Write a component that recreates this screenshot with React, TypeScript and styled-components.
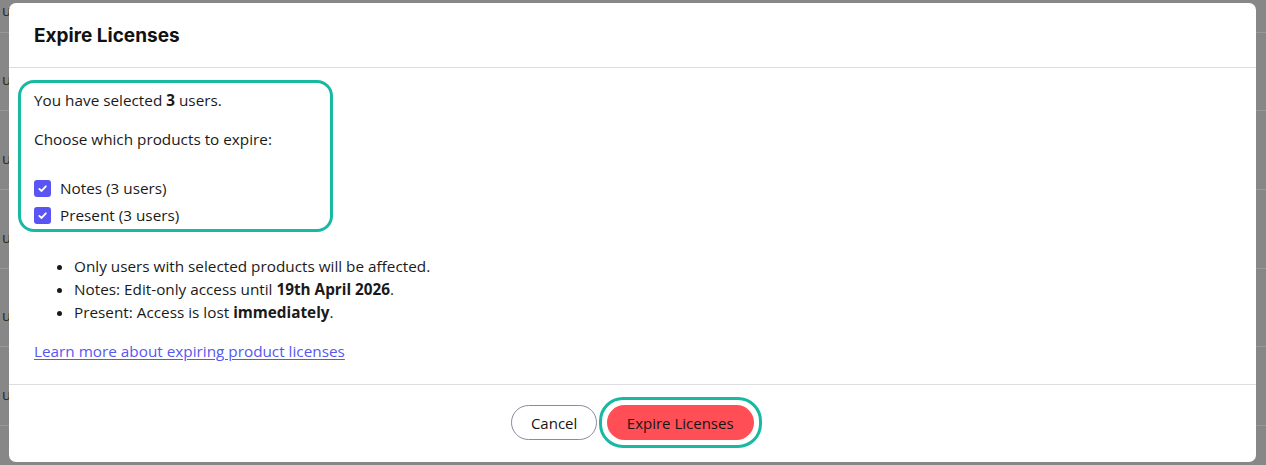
import React from "react";
import styled, { createGlobalStyle } from "styled-components";

const Global = createGlobalStyle`
  html, body { margin: 0; padding: 0; }
  body {
    width: 1266px;
    height: 465px;
    overflow: hidden;
    background: #878787;
    font-family: "Open Sans", "Noto Sans", sans-serif;
  }
`;

const Page = styled.div`
  position: relative;
  width: 1266px;
  height: 465px;
  overflow: hidden;
  background: #878787;
`;

const BgRow = styled.div<{ $h: number; $pb?: number }>`
  height: ${(p) => p.$h}px;
  box-sizing: border-box;
  border-bottom: 1px solid #999999;
  display: flex;
  align-items: flex-end;
  padding: 0 0 ${(p) => p.$pb ?? 22}px 2px;
  font-size: 15px;
  line-height: 18px;
  color: #2a2a2a;
`;

const BgFooter = styled.div`
  display: flex;
  gap: 140px;
  padding: 4px 0 0 180px;
  font-size: 14px;
  color: #333;
`;

const Modal = styled.div`
  position: absolute;
  top: 3px;
  left: 9px;
  width: 1247px;
  background: #ffffff;
  border-radius: 7px;
  box-sizing: border-box;
  display: flex;
  flex-direction: column;
  color: #1a1a1a;
`;

const Header = styled.div`
  height: 65px;
  box-sizing: border-box;
  padding: 0 25px;
  display: flex;
  align-items: center;
  border-bottom: 1px solid #dedee2;
`;

const Title = styled.h2`
  margin: 0;
  font-family: Inter, "Open Sans", sans-serif;
  font-weight: 700;
  font-size: 19px;
  color: #111;
  padding-top: 1px;
`;

const Body = styled.div`
  padding: 12px 25px 22px;
  font-size: 15.3px;
  line-height: 22px;
`;

const Highlight = styled.div`
  width: 315px;
  box-sizing: border-box;
  margin-left: -16px;
  border: 3px solid #17b9a0;
  border-radius: 16px;
  padding: 6px 13px 3px;
`;

const Para = styled.p<{ $mb: number }>`
  margin: 0 0 ${(p) => p.$mb}px;
`;

const CheckRow = styled.label`
  display: flex;
  align-items: center;
  gap: 9px;
  height: 22px;
  & + & {
    margin-top: 5px;
  }
`;

const Box = styled.span`
  width: 17px;
  height: 17px;
  border-radius: 3px;
  background: #5a55f2;
  display: inline-flex;
  align-items: center;
  justify-content: center;
  flex: none;
`;

const List = styled.ul`
  margin: 23px 0 16px;
  padding-left: 40px;
  line-height: 23px;
`;

const Link = styled.a`
  display: inline-block;
  color: #5757f2;
  text-decoration: underline;
  text-underline-offset: 2px;
  cursor: pointer;
`;

const Footer = styled.div`
  border-top: 1px solid #dedee2;
  padding: 20px 0 22px;
  display: flex;
  justify-content: center;
  align-items: center;
  gap: 10px;
`;

const Button = styled.button<{ $primary?: boolean }>`
  height: 35px;
  box-sizing: border-box;
  border-radius: 18px;
  padding: 0 ${(p) => (p.$primary ? 20 : 18.5)}px;
  font-family: "Open Sans", "Noto Sans", sans-serif;
  font-size: 15px;
  font-weight: 500;
  color: #161616;
  background: ${(p) => (p.$primary ? "#ff4e55" : "#ffffff")};
  border: ${(p) => (p.$primary ? "none" : "1px solid #8a8aa0")};
  cursor: pointer;
`;

const ButtonRing = styled.div`
  margin: -8px;
  padding: 5px;
  border: 3px solid #17b9a0;
  border-radius: 24px;
  display: flex;
`;

const Check = () => (
  <Box>
    <svg width="11" height="11" viewBox="0 0 12 12" fill="none">
      <path
        d="M2.5 6.4 L5 8.7 L9.6 3.6"
        stroke="#fff"
        strokeWidth="2"
        strokeLinecap="round"
        strokeLinejoin="round"
      />
    </svg>
  </Box>
);

export default function App() {
  return (
    <>
      <Global />
      <Page>
        <BgRow $h={33} $pb={13}>u</BgRow>
        <BgRow $h={78}>u</BgRow>
        <BgRow $h={79}>u</BgRow>
        <BgRow $h={79}>u</BgRow>
        <BgRow $h={78}>u</BgRow>
        <BgRow $h={79}>u</BgRow>
        <BgFooter>
          <span>Add comment</span>
          <span>Academic Probation - UK</span>
        </BgFooter>
        <Modal>
          <Header>
            <Title>Expire Licenses</Title>
          </Header>
          <Body>
            <Highlight>
              <Para $mb={17}>
                You have selected <b>3</b> users.
              </Para>
              <Para $mb={27}>Choose which products to expire:</Para>
              <CheckRow>
                <Check />
                Notes (3 users)
              </CheckRow>
              <CheckRow>
                <Check />
                Present (3 users)
              </CheckRow>
            </Highlight>
            <List>
              <li>Only users with selected products will be affected.</li>
              <li>
                Notes: Edit-only access until <b>19th April 2026</b>.
              </li>
              <li>
                Present: Access is lost <b>immediately</b>.
              </li>
            </List>
            <Link>Learn more about expiring product licenses</Link>
          </Body>
          <Footer>
            <Button>Cancel</Button>
            <ButtonRing>
              <Button $primary>Expire Licenses</Button>
            </ButtonRing>
          </Footer>
        </Modal>
      </Page>
    </>
  );
}
